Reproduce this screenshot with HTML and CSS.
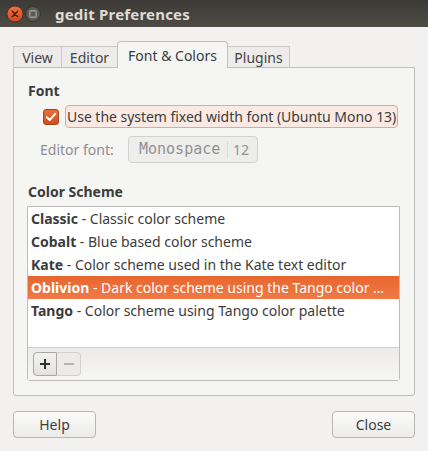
FILE: index.html
```html
<!DOCTYPE html>
<html>
<head>
<meta charset="utf-8">
<link rel="stylesheet" href="styles.css">
</head>
<body>
<div class="window">
  <div class="titlebar">
    <div class="wm-buttons">
      <svg class="wm-close" width="18" height="18" viewBox="0 0 18 18">
        <defs>
          <linearGradient id="cg" x1="0" y1="0" x2="0" y2="1">
            <stop offset="0" stop-color="#f0703f"/>
            <stop offset="1" stop-color="#d9481b"/>
          </linearGradient>
        </defs>
        <circle cx="9" cy="9" r="8" fill="url(#cg)" stroke="#3a2a22" stroke-width="0.8"/>
        <path d="M6.3 6.3 L11.7 11.7 M11.7 6.3 L6.3 11.7" stroke="#3b2118" stroke-width="1.5" stroke-linecap="round"/>
      </svg>
      <svg class="wm-max" width="18" height="18" viewBox="0 0 18 18">
        <circle cx="9" cy="9" r="7.5" fill="#5d5b55" stroke="#2f2e2a" stroke-width="0.8"/>
        <rect x="5.8" y="5.8" width="6.4" height="6.4" rx="1" fill="none" stroke="#9c9a94" stroke-width="1.4"/>
      </svg>
    </div>
    <div class="title">gedit Preferences</div>
  </div>

  <div class="main">
    <div class="notebook">
      <div class="tabs">
        <div class="tab tab-view">View</div>
        <div class="tab tab-editor">Editor</div>
        <div class="tab tab-font active">Font &amp; Colors</div>
        <div class="tab tab-plugins">Plugins</div>
      </div>
      <div class="panel">
        <div class="heading">Font</div>
        <div class="check-row">
          <span class="checkbox">
            <svg width="16" height="16" viewBox="0 0 16 16">
              <path d="M3.8 8.2 L6.7 11 L12.2 4.8" fill="none" stroke="#ffffff" stroke-width="2" stroke-linecap="round" stroke-linejoin="round"/>
            </svg>
          </span>
          <span class="check-label">Use the system fixed width font (Ubuntu Mono 13)</span>
        </div>
        <div class="font-row">
          <span class="font-label">Editor font:</span>
          <span class="font-button">
            <span class="font-name">Monospace</span>
            <span class="font-size">12</span>
          </span>
        </div>
        <div class="heading heading-scheme">Color Scheme</div>
        <div class="scheme-box">
          <div class="scheme-list">
            <div class="row"><b>Classic</b> - Classic color scheme</div>
            <div class="row"><b>Cobalt</b> - Blue based color scheme</div>
            <div class="row"><b>Kate</b> - Color scheme used in the Kate text editor</div>
            <div class="row selected"><b>Oblivion</b> - Dark color scheme using the Tango color …</div>
            <div class="row"><b>Tango</b> - Color scheme using Tango color palette</div>
          </div>
          <div class="scheme-toolbar">
            <div class="linked">
              <span class="tool-btn add">
                <svg width="12" height="12" viewBox="0 0 12 12"><path d="M6 1 V11 M1 6 H11" stroke="#2f2f2f" stroke-width="2"/></svg>
              </span>
              <span class="tool-btn remove">
                <svg width="12" height="12" viewBox="0 0 12 12"><path d="M1 6 H11" stroke="#b3b3b3" stroke-width="2"/></svg>
              </span>
            </div>
          </div>
        </div>
      </div>
    </div>

    <div class="actions">
      <button class="btn">Help</button>
      <button class="btn">Close</button>
    </div>
  </div>
</div>
</body>
</html>
```

FILE: styles.css
```css
* { box-sizing: border-box; }

html, body {
  margin: 0;
  padding: 0;
  background: #f2f1f0;
}

body {
  font-family: "Noto Sans", "DejaVu Sans", sans-serif;
  font-size: 14px;
  color: #3c3c3c;
}

.window {
  width: 428px;
  height: 451px;
  background: #f2f1f0;
  overflow: hidden;
}

.titlebar {
  height: 27px;
  background: linear-gradient(#3b3a36, #4e4b45);
  display: flex;
  align-items: center;
  padding-left: 6px;
}

.wm-buttons {
  display: flex;
  align-items: center;
}

.wm-buttons svg {
  display: block;
}

.title {
  margin-left: 13px;
  color: #dfdbd2;
  font-weight: bold;
  font-size: 15px;
  letter-spacing: 0.2px;
}

.main {
  padding: 14px 13px 0 13px;
}

.tabs {
  display: flex;
  align-items: flex-end;
  height: 26px;
}

.tab {
  height: 21px;
  display: flex;
  align-items: center;
  justify-content: center;
  background: #edecea;
  border: 1px solid #cdcac5;
  border-bottom: none;
  border-left: none;
  color: #444;
  font-size: 14px;
}

.tab-view { width: 49px; border-left: 1px solid #cdcac5; }
.tab-editor { width: 56px; }
.tab-font { width: 111px; margin-left: -1px; }
.tab-plugins { width: 62px; }

.tab.active {
  height: 27px;
  margin-bottom: -1px;
  background: #f5f5f4;
  border: 1px solid #c2bfba;
  border-bottom: none;
  border-radius: 4px 4px 0 0;
  color: #3c3c3c;
  position: relative;
  z-index: 1;
}

.panel {
  height: 329px;
  background: #f5f5f4;
  border: 1px solid #c2bfba;
  border-radius: 0 0 3px 3px;
  padding: 14px 13px 0 14px;
}

.heading {
  font-weight: bold;
  line-height: 18px;
  height: 18px;
}

.check-row {
  margin-top: 5px;
  display: flex;
  align-items: center;
  padding-left: 15px;
  height: 23px;
}

.checkbox {
  width: 16px;
  height: 16px;
  border-radius: 3px;
  background: linear-gradient(#e96d3a, #cf4f1e);
  border: 1px solid #a8441a;
  display: flex;
  align-items: center;
  justify-content: center;
}

.checkbox svg {
  display: block;
  margin: -1px;
}

.check-label {
  margin-left: 6px;
  height: 23px;
  line-height: 21px;
  padding: 0 1px;
  border: 1px solid #f2a385;
  border-radius: 4px;
  background: #fbeae3;
  white-space: nowrap;
  letter-spacing: -0.03px;
}

.font-row {
  margin-top: 8px;
  display: flex;
  align-items: center;
  height: 27px;
  padding-left: 12px;
}

.font-label {
  color: #8e8e8e;
  width: 88px;
}

.font-button {
  display: flex;
  align-items: center;
  height: 27px;
  width: 130px;
  border: 1px solid #d2d1cf;
  border-radius: 4px;
  background: #ededec;
  color: #929292;
}

.font-name {
  font-family: "DejaVu Sans Mono", "Liberation Mono", monospace;
  font-size: 15px;
  padding-left: 10px;
  width: 99px;
  border-right: 1px solid #dddcda;
  line-height: 17px;
}

.font-size {
  padding-left: 5px;
  font-size: 14px;
}

.heading-scheme {
  margin-top: 20px;
}

.scheme-box {
  margin-top: 5px;
  border: 1px solid #bdbcba;
  border-radius: 0 0 3px 3px;
  width: 373px;
  margin-left: -1px;
}

.scheme-list {
  background: #ffffff;
  height: 140px;
}

.row {
  height: 23px;
  line-height: 23px;
  padding-left: 3px;
  padding-right: 10px;
  white-space: nowrap;
  overflow: hidden;
  text-overflow: ellipsis;
  color: #3c3c3c;
}

.row b {
  font-weight: bold;
}

.row.selected {
  background: linear-gradient(#e9652e, #f07a47);
  color: #ffffff;
}

.scheme-toolbar {
  height: 33px;
  border-top: 1px solid #cfcecc;
  background: linear-gradient(#ecebea, #f6f6f5);
  padding: 4px 5px;
}

.linked {
  display: flex;
  width: 48px;
  height: 24px;
}

.tool-btn {
  width: 24px;
  height: 24px;
  display: flex;
  align-items: center;
  justify-content: center;
  border: 1px solid #c4c3c1;
}

.tool-btn.add {
  border-radius: 4px 0 0 4px;
  background: linear-gradient(#f2f2f1, #e3e2e0);
  border-color: #a9a8a5;
}

.tool-btn.remove {
  border-left: none;
  border-radius: 0 4px 4px 0;
  background: #ecebea;
  border-color: #d3d2d0;
}

.actions {
  display: flex;
  justify-content: space-between;
  margin-top: 15px;
}

.btn {
  width: 83px;
  height: 27px;
  font-family: "Noto Sans", "DejaVu Sans", sans-serif;
  font-size: 14px;
  color: #3c3c3c;
  background: linear-gradient(#fbfbfb, #ebebea);
  border: 1px solid #b8b6b2;
  border-radius: 4px;
  padding: 0;
}
```
